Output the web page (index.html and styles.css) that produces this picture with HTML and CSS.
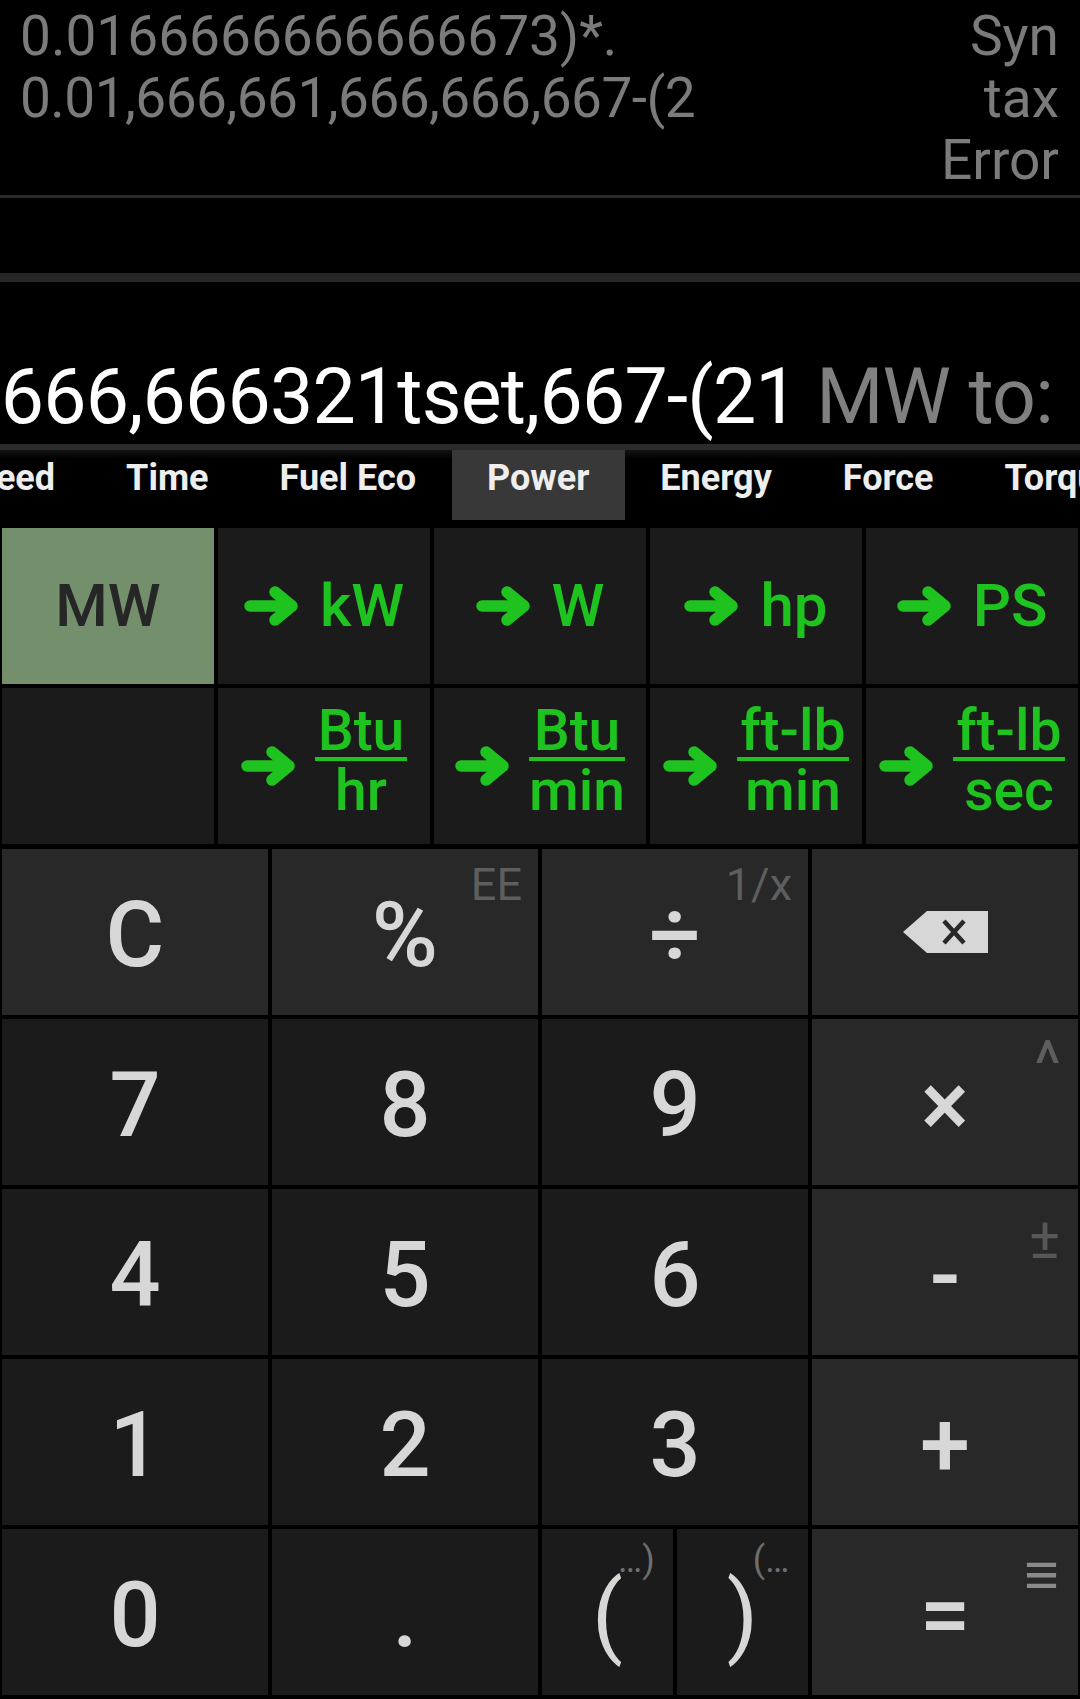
FILE: index.html
```html
<!DOCTYPE html>
<html>
<head>
<meta charset="utf-8">
<title>Power converter calculator</title>
<link rel="stylesheet" href="styles.css">
</head>
<body>
<svg class="defs" width="0" height="0">
  <symbol id="arr" viewBox="0 0 56 40">
    <path d="M6 20 H47 M31 6 L48 20 L31 34" fill="none" stroke="currentColor" stroke-width="11.5" stroke-linecap="round" stroke-linejoin="round"/>
  </symbol>
</svg>
<div class="app">
  <section class="history">
    <div class="hist-expr">
      <div class="hist-line">0.0166666666666673)*.</div>
      <div class="hist-line tight">0.01,666,661,666,666,667-(2</div>
    </div>
    <div class="hist-result">Syn<br>tax<br>Error</div>
  </section>
  <div class="divider thin"></div>
  <div class="history-empty"></div>
  <div class="divider thick"></div>
  <section class="display">
    <div class="display-text"><span class="expr">666,666321tset,667-(21</span><span class="unit"> MW to:</span></div>
  </section>
  <div class="divider mid"></div>
  <nav class="tabs">
    <div class="tab-strip">
      <div class="tab">Speed</div>
      <div class="tab">Time</div>
      <div class="tab">Fuel Eco</div>
      <div class="tab active">Power</div>
      <div class="tab">Energy</div>
      <div class="tab">Force</div>
      <div class="tab">Torque</div>
    </div>
  </nav>
  <section class="units">
    <div class="ucell sel">MW</div>
    <div class="ucell"><svg class="arrow"><use href="#arr"/></svg><span>kW</span></div>
    <div class="ucell"><svg class="arrow"><use href="#arr"/></svg><span>W</span></div>
    <div class="ucell"><svg class="arrow"><use href="#arr"/></svg><span>hp</span></div>
    <div class="ucell"><svg class="arrow"><use href="#arr"/></svg><span>PS</span></div>
    <div class="ucell"></div>
    <div class="ucell f"><svg class="arrow"><use href="#arr"/></svg><span class="frac"><span class="num">Btu</span><span class="den">hr</span></span></div>
    <div class="ucell f"><svg class="arrow"><use href="#arr"/></svg><span class="frac"><span class="num">Btu</span><span class="den">min</span></span></div>
    <div class="ucell f"><svg class="arrow"><use href="#arr"/></svg><span class="frac"><span class="num">ft-lb</span><span class="den">min</span></span></div>
    <div class="ucell f"><svg class="arrow"><use href="#arr"/></svg><span class="frac"><span class="num">ft-lb</span><span class="den">sec</span></span></div>
  </section>
  <section class="keypad">
    <div class="key op">C</div>
    <div class="key op">%<span class="alt">EE</span></div>
    <div class="key op">÷<span class="alt">1/x</span></div>
    <div class="key op"><svg class="bksp" viewBox="0 0 85 42" width="85" height="42"><path d="M0 21 L24 0 H85 V42 H24 Z" fill="#d7d7d7"/><path d="M41 10 L61 32 M61 10 L41 32" stroke="#282828" stroke-width="4.5"/></svg></div>

    <div class="key">7</div>
    <div class="key">8</div>
    <div class="key">9</div>
    <div class="key op">×<span class="alt caret">^</span></div>

    <div class="key">4</div>
    <div class="key">5</div>
    <div class="key">6</div>
    <div class="key op">-<span class="alt pm">±</span></div>

    <div class="key">1</div>
    <div class="key">2</div>
    <div class="key">3</div>
    <div class="key op">+</div>

    <div class="key">0</div>
    <div class="key">.</div>
    <div class="split">
      <div class="key"><span class="paren">(<span class="sup sup-l">…)</span></span></div>
      <div class="key"><span class="paren">)<span class="sup sup-r">(…</span></span></div>
    </div>
    <div class="key op">=<span class="alt menu">≡</span></div>
  </section>
</div>
</body>
</html>
```
FILE: styles.css
```css
* {
  box-sizing: border-box;
  margin: 0;
  padding: 0;
}

html, body {
  background: #000;
}

body {
  width: 1080px;
  height: 1699px;
  overflow: hidden;
  font-family: Roboto, "Liberation Sans", sans-serif;
}

.defs {
  position: absolute;
  width: 0;
  height: 0;
}

.app {
  display: flex;
  flex-direction: column;
  width: 1080px;
  height: 1699px;
}

/* history */
.history {
  height: 195px;
  display: flex;
  justify-content: space-between;
  padding: 5px 21px 0 20px;
  color: #7b7b7b;
  font-size: 55px;
  line-height: 62px;
}

.hist-line {
  white-space: nowrap;
}

.hist-line.tight {
  letter-spacing: -0.55px;
}

.hist-result {
  text-align: right;
}

.divider.thin {
  height: 3px;
  background: #2a2a2a;
}

.history-empty {
  height: 75px;
}

.divider.thick {
  height: 9px;
  background: #262626;
}

/* main display */
.display {
  height: 162px;
  display: flex;
  justify-content: flex-end;
  align-items: flex-end;
  overflow: hidden;
  padding: 0 27px 2px 0;
}

.display-text {
  flex: none;
  white-space: nowrap;
  font-size: 77px;
  line-height: 90px;
  letter-spacing: -0.8px;
  color: #ffffff;
}

.display-text .unit {
  color: #808080;
}

.divider.mid {
  height: 6px;
  background: #2b2b2b;
}

/* tabs */
.tabs {
  height: 70px;
  overflow: hidden;
  background: linear-gradient(#131313, #000 9px);
}

.tab-strip {
  display: flex;
  height: 70px;
  margin-left: -82px;
}

.tab {
  flex: none;
  padding: 0 35.5px 14px;
  line-height: 56px;
  font-size: 36px;
  font-weight: 700;
  color: #eeeeee;
  white-space: nowrap;
}

.tab.active {
  background: #383838;
}

/* unit grid */
.units {
  margin-top: 6px;
  display: grid;
  grid-template-columns: repeat(5, 212px);
  grid-template-rows: 156px 156px;
  gap: 4px;
  padding: 2px 2px 3px;
}

.ucell {
  background: #1b1b1b;
  display: flex;
  align-items: center;
  justify-content: center;
  gap: 20px;
  color: #1fc31f;
  font-size: 60px;
  font-weight: 500;
  line-height: 1.172;
}

.ucell.sel {
  background: #738f6b;
  color: #262626;
}

.ucell.f {
  gap: 18px;
}

.arrow {
  flex: none;
  width: 56px;
  height: 40px;
  color: #1fc31f;
}

.frac {
  display: inline-flex;
  flex-direction: column;
  font-size: 57px;
  margin-bottom: 10px;
}

.num {
  line-height: 52px;
  border-bottom: 4px solid currentColor;
  text-align: center;
  padding: 0 3px;
}

.den {
  line-height: 52px;
  padding-top: 4px;
  text-align: center;
}

/* keypad */
.keypad {
  flex: 1;
  display: grid;
  grid-template-columns: repeat(4, 266px);
  grid-template-rows: repeat(5, 166px);
  gap: 4px;
  padding: 2px;
}

.split {
  display: grid;
  grid-template-columns: 1fr 1fr;
  gap: 4px;
}

.key {
  position: relative;
  display: flex;
  align-items: center;
  justify-content: center;
  background: #1b1b1b;
  color: #d7d7d7;
  font-size: 90px;
  font-weight: 500;
  line-height: 1.172;
  padding-top: 7px;
}

.key.op {
  background: #282828;
}

.bksp {
  display: block;
  margin-top: -7px;
}

.alt {
  position: absolute;
  top: 13px;
  right: 16px;
  font-size: 45px;
  font-weight: 400;
  line-height: 45px;
  color: #5e5e5e;
}

.alt.caret {
  top: 14px;
  right: 17px;
  font-size: 64px;
  line-height: 64px;
}

.alt.pm {
  top: 20px;
  right: 18px;
  font-size: 58px;
  line-height: 58px;
  color: #575757;
}

.alt.menu {
  top: 16px;
  right: 19px;
  font-size: 60px;
  line-height: 60px;
  color: #8a8a8a;
}

.paren {
  position: relative;
  display: inline-block;
  font-weight: 400;
}

.sup {
  position: absolute;
  top: -21px;
  font-size: 36px;
  line-height: 36px;
  color: #6e6e6e;
  white-space: nowrap;
}

.sup-l {
  left: 26px;
}

.sup-r {
  left: 26px;
}
```
